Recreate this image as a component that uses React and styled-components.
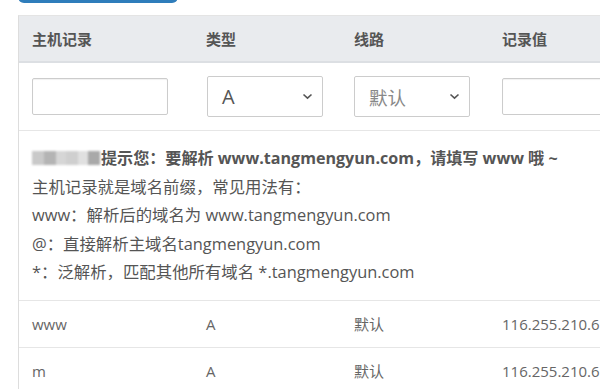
import React from 'react';
import styled, {createGlobalStyle} from 'styled-components';

const Global = createGlobalStyle`
  html, body {
    margin: 0;
    padding: 0;
    background: #fff;
    overflow: hidden;
  }
  body {
    font-family: "Open Sans", "Noto Sans CJK SC", sans-serif;
    color: #555;
  }
`;

const Page = styled.div`
  padding-left: 18px;
  width: 760px;
`;

const TopButton = styled.button`
  display: block;
  width: 160px;
  height: 34px;
  margin-top: -31px;
  border: none;
  border-radius: 6px;
  background: #2f7dbb;
`;

const Table = styled.div`
  margin-top: 12px;
  border-left: 1px solid #ddd;
  border-top: 1px solid #e4e4e4;
`;

const Row = styled.div`
  display: grid;
  grid-template-columns: 174px 148px 148px 1fr;
  align-items: center;
  height: ${({h}) => h}px;
  box-sizing: border-box;
  border-bottom: ${({thick}) => (thick ? '2px solid #dcdfe3' : '1px solid #e6e6e6')};
  background: ${({head}) => (head ? '#e9ebee' : '#fff')};
`;

const Cell = styled.div`
  padding-left: ${({pad}) => (pad === undefined ? 13 : pad)}px;
  font-size: 15px;
  font-weight: ${({bold}) => (bold ? 700 : 400)};
  color: ${({bold}) => (bold ? '#555' : '#666')};
  white-space: nowrap;
  overflow: hidden;
`;

const TextInput = styled.input`
  display: block;
  width: ${({wide}) => (wide ? 200 : 136)}px;
  height: 37px;
  box-sizing: border-box;
  border: 1px solid #ccc;
  border-radius: 2px;
  box-shadow: inset 0 1px 1px rgba(0, 0, 0, 0.06);
  outline: none;
`;

const Select = styled.div`
  display: flex;
  align-items: center;
  justify-content: space-between;
  width: 116px;
  height: 41px;
  box-sizing: border-box;
  padding: 0 9px 0 14px;
  border: 1px solid #ccc;
  border-radius: 2px;
  font-size: ${({muted}) => (muted ? 18.5 : 20)}px;
  color: ${({muted}) => (muted ? '#888' : '#555')};
`;

const Hint = styled.div`
  padding: 13px 13px 13px 13px;
  border-bottom: 1px solid #e6e6e6;
  font-size: 16.4px;
  line-height: 28.5px;
  color: #555;
  white-space: nowrap;
`;

const Strong = styled.div`
  font-size: 16.1px;
  font-weight: 700;
`;

const Mosaic = styled.span`
  display: inline-block;
  vertical-align: -1px;
  width: 68px;
  height: 14px;
  margin-right: 1px;
  background: linear-gradient(90deg,
    #c9c9c9 0 12px, #b4b4b4 12px 24px, #d6d6d6 24px 34px,
    #cfcfcf 34px 46px, #e0e0e0 46px 56px, #a9a9a9 56px 68px);
  filter: blur(1px);
`;

const Chevron = () => (
    <svg width="11" height="7" viewBox="0 0 11 7">
        <path d="M1.5 1.5 L5.5 5.2 L9.5 1.5" fill="none" stroke="#555" strokeWidth="1.6"/>
    </svg>
);

const records = [
    {host: 'www', type: 'A', line: '默认', value: '116.255.210.6'},
    {host: 'm', type: 'A', line: '默认', value: '116.255.210.6'},
];

export default function App() {
    return (
        <Page>
            <Global/>
            <TopButton/>
            <Table>
                <Row head thick h={47}>
                    <Cell bold>主机记录</Cell>
                    <Cell bold>类型</Cell>
                    <Cell bold>线路</Cell>
                    <Cell bold>记录值</Cell>
                </Row>
                <Row h={68}>
                    <Cell><TextInput/></Cell>
                    <Cell pad={14}><Select>A<Chevron/></Select></Cell>
                    <Cell pad={13}><Select muted>默认<Chevron/></Select></Cell>
                    <Cell><TextInput wide/></Cell>
                </Row>
                <Hint>
                    <Strong><Mosaic/>提示您：要解析 www.tangmengyun.com，请填写 www 哦 ~</Strong>
                    <div>主机记录就是域名前缀，常见用法有：</div>
                    <div>www：解析后的域名为 www.tangmengyun.com</div>
                    <div>@：直接解析主域名tangmengyun.com</div>
                    <div>*：泛解析，匹配其他所有域名 *.tangmengyun.com</div>
                </Hint>
                {records.map((r) => (
                    <Row key={r.host} h={47}>
                        <Cell>{r.host}</Cell>
                        <Cell>{r.type}</Cell>
                        <Cell>{r.line}</Cell>
                        <Cell>{r.value}</Cell>
                    </Row>
                ))}
            </Table>
        </Page>
    );
}
